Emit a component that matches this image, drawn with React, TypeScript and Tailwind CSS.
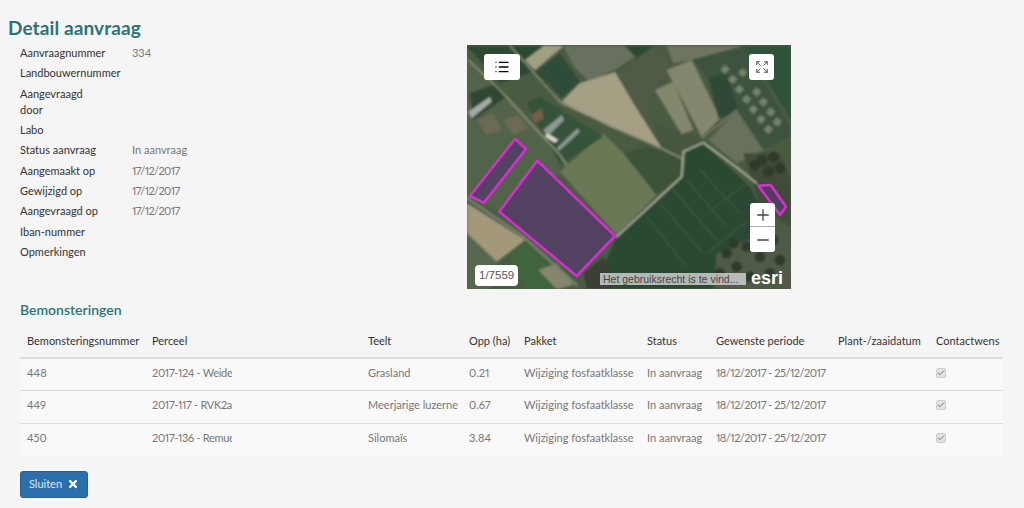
import { FaTimes } from "react-icons/fa";
import { Check, Expand, List, Minus, Plus } from "lucide-react";

const details: [string, string][] = [
  ["Aanvraagnummer", "334"],
  ["Landbouwernummer", ""],
  ["Aangevraagd door", ""],
  ["Labo", ""],
  ["Status aanvraag", "In aanvraag"],
  ["Aangemaakt op", "17/12/2017"],
  ["Gewijzigd op", "17/12/2017"],
  ["Aangevraagd op", "17/12/2017"],
  ["Iban-nummer", ""],
  ["Opmerkingen", ""],
];

const rows = [
  ["448", "2017-124 - Weide", "Grasland", "0.21"],
  ["449", "2017-117 - RVK2a", "Meerjarige luzerne", "0.67"],
  ["450", "2017-136 - Remue", "Silomaïs", "3.84"],
];

const plots = [
  [795, 88], [818, 118], [838, 148], [860, 178], [880, 208], [903, 238], [925, 268],
  [848, 98], [890, 156], [910, 186], [932, 216], [952, 246],
];

const trees = [
  [800, 640], [830, 680], [860, 620], [900, 650], [940, 600], [780, 700], [930, 700], [870, 710], [960, 660], [820, 610],
  [905, 360], [940, 350], [960, 385], [885, 375], [925, 395],
];

const MapPicture = () => (
  <svg viewBox="21 15 972 732" className="absolute inset-0 w-full h-full">
    <defs>
      <filter id="soft">
        <feGaussianBlur stdDeviation="3" />
      </filter>
    </defs>
    <g filter="url(#soft)">
      <rect x="0" y="0" width="1000" height="760" fill="#4a5b43" />
      <polygon points="195,60 250,18 310,18 225,90" fill="#a39f84" />
      <polygon points="310,18 495,18 525,50 470,85 390,125 345,85" fill="#687160" />
      <polygon points="495,18 580,18 530,55" fill="#2c4a32" />
      <polygon points="150,18 250,18 195,60" fill="#2c4a32" />
      <polygon points="235,90 300,40 360,125 305,175" fill="#2f4d37" />
      <polygon points="305,185 360,130 465,97 520,190 605,325 450,260" fill="#a5a084" />
      <polygon points="475,100 590,20 640,90 585,140 560,215 610,325 520,190" fill="#505a47" />
      <polygon points="620,90 695,60 780,235 725,290" fill="#83876d" />
      <polygon points="585,150 640,125 700,270 665,282" fill="#84876c" />
      <polygon points="575,240 665,282 725,290 725,305 665,350 610,325" fill="#475640" />
      <polygon points="700,60 790,18 850,18 990,260 990,290 910,330" fill="#3e5340" />
      <polygon points="745,115 800,100 835,215 775,235" fill="#2e4a35" />
      <polygon points="850,18 993,18 993,240 920,120" fill="#2d5238" />
      <polygon points="620,18 850,18 690,60 640,70" fill="#6f7562" />
      <polygon points="745,300 830,210 910,330 830,370" fill="#69705b" />
      <polygon points="300,395 430,280 490,340 590,465 470,585" fill="#6a7856" />
      <polygon points="490,340 560,320 665,355 665,410 590,465" fill="#3e5338" />
      <polygon points="470,590 670,410 680,330 730,310 870,440 900,500 870,747 400,747" fill="#2b4a31" />
      <g stroke="#3a5a3e" strokeWidth="4" fill="none">
        <path d="M680 420 L800 560 M640 450 L770 600 M600 490 L730 640 M560 530 L680 680 M720 390 L840 520" />
        <path d="M760 505 L860 430 M740 640 L860 545" />
      </g>
      <polygon points="21,490 195,600 110,665 21,580" fill="#a4987a" />
      <polygon points="21,580 110,665 90,747 21,747" fill="#56684f" />
      <polygon points="145,640 195,605 260,670 300,747 200,747" fill="#3f653e" />
      <polygon points="235,690 290,670 340,735 290,747" fill="#86866c" />
      <polygon points="21,60 120,150 300,345 300,400 118,515 21,470" fill="#51634a" />
      <polygon points="21,18 150,18 305,190 235,90 120,130" fill="#2e4a33" />
      <polygon points="30,160 110,130 140,170 40,240" fill="#2d4733" />
      <polygon points="50,240 100,220 125,270 80,285" fill="#6c6a55" />
      <polygon points="130,240 175,225 205,265 160,285" fill="#6c6a55" />
      <polygon points="200,190 240,170 430,290 300,375" fill="#35533a" />
      <polygon points="770,640 860,600 993,560 993,747 760,747" fill="#4f5a48" />
      <polygon points="850,340 960,340 993,420 993,560 900,500" fill="#404b38" />
      <polygon points="370,700 430,650 470,747 380,747" fill="#3b4034" />
      {plots.map(([x, y]) => (
        <rect key={`${x}-${y}`} x={x - 10} y={y - 10} width="20" height="20" fill="#75836c" transform={`rotate(40 ${x} ${y})`} />
      ))}
      {trees.map(([x, y]) => (
        <circle key={`${x}-${y}`} cx={x} cy={y} r="16" fill="#2e3a2a" />
      ))}
      <g fill="none" strokeLinecap="round">
        <path d="M150 18 L305 190 L605 325 L665 355" stroke="#8f9379" strokeWidth="4" />
        <path d="M25 60 L120 150 L300 345 L320 375" stroke="#8e9179" strokeWidth="5" />
        <path d="M21 475 L190 590 L350 735" stroke="#7c8272" strokeWidth="7" />
        <path d="M470 590 L665 410 L670 335 L730 308 L840 390 L890 430" stroke="#bfc4b0" strokeWidth="4" />
        <path d="M725 295 L830 210" stroke="#92957b" strokeWidth="3" />
      </g>
      <polygon points="250,270 305,225 312,240 262,290" fill="#8b9a93" />
      <polygon points="290,325 352,265 360,275 298,332" fill="#8a9790" />
      <polygon points="262,280 295,300 285,308 255,290" fill="#d8d8cc" />
      <polygon points="215,225 245,205 250,235 225,250" fill="#7a5a4a" />
      <polygon points="25,215 90,170 95,185 35,235" fill="#a6aaa6" />
    </g>
    <g stroke="#d22fce" strokeWidth="8" strokeLinejoin="round" fill="#533c66" fillOpacity="0.85">
      <polygon points="165,297 198,327 72,488 30,468" />
      <polygon points="232,362 465,588 350,708 118,515" />
      <polygon points="895,437 932,435 978,500 960,525" />
    </g>
  </svg>
);

export default function App() {
  return (
    <div className="relative h-[508px] w-[1024px] overflow-hidden bg-[#f5f5f5] pl-[8px] pt-[15px] font-['Lato',sans-serif] text-[11px] text-[#333] proportional-nums">
      <h1 className="h-[25px] text-[19px] font-bold leading-[25px] tracking-[0.1px] text-[#2b7478]">Detail aanvraag</h1>

      <div className="mt-[5px] flex h-[244px]">
        <dl className="ml-[12px] w-[447px] -mt-[2px]">
          {details.map(([label, value]) => (
            <div key={label} className="grid grid-cols-[112px_1fr] py-[2px] leading-[16.3px]">
              <dt className="w-[80px]">{label}</dt>
              <dd className={value.includes("/") ? "tracking-[-0.6px] text-[#777]" : "text-[#777]"}>{value}</dd>
            </div>
          ))}
        </dl>

        <div className="relative h-[244px] w-[324px] overflow-hidden">
          <MapPicture />
          <button className="absolute left-[17px] top-[9px] flex h-[26px] w-[36px] items-center justify-center rounded-[3px] bg-white text-black">
            <List size={16} strokeWidth={2} />
          </button>
          <button className="absolute right-[17px] top-[9px] flex h-[26px] w-[25px] items-center justify-center rounded-[3px] bg-white text-[#444]">
            <Expand size={14} strokeWidth={1.5} />
          </button>
          <div className="absolute left-[283px] top-[158px] flex w-[25px] flex-col rounded-[3px] bg-white text-[#444]">
            <div className="flex h-[24px] items-center justify-center border-b border-[#aaa]">
              <Plus size={18} strokeWidth={1.75} />
            </div>
            <div className="flex h-[25px] items-center justify-center">
              <Minus size={18} strokeWidth={1.75} />
            </div>
          </div>
          <div className="absolute bottom-[3px] left-[8px] rounded-[4px] bg-white px-[4px] py-[3px] font-['Liberation_Sans',sans-serif] text-[11.5px] leading-[15px] text-[#555]">
            1/7559
          </div>
          <div className="absolute bottom-[4px] left-[133px] h-[12px] w-[146px] whitespace-nowrap bg-[#ccc]/85 px-[3px] font-['Liberation_Sans',sans-serif] text-[10.5px] leading-[12px] text-[#444]">
            Het gebruiksrecht is te vind...
          </div>
          <div className="absolute bottom-[1px] right-[8px] font-['Liberation_Sans',sans-serif] text-[18px] font-bold leading-[20px] text-white">
            esri
          </div>
        </div>
      </div>

      <div className="ml-[12px] mr-[13px]">
        <h2 className="mt-[11px] h-[20px] text-[14px] font-semibold leading-[20px] text-[#2b7478]">Bemonsteringen</h2>

        <table className="mt-[5px] w-[983px] table-fixed border-collapse text-left">
          <colgroup>
            <col className="w-[125px]" />
            <col className="w-[216px]" />
            <col className="w-[101px]" />
            <col className="w-[55px]" />
            <col className="w-[123px]" />
            <col className="w-[69px]" />
            <col className="w-[122px]" />
            <col className="w-[98px]" />
            <col className="w-[74px]" />
          </colgroup>
          <thead>
            <tr className="h-[33px] border-b-2 border-[#ddd]">
              {["Bemonsteringsnummer", "Perceel", "Teelt", "Opp (ha)", "Pakket", "Status", "Gewenste periode", "Plant-/zaaidatum", "Contactwens"].map((h) => (
                <th key={h} className="whitespace-nowrap px-[7px] font-normal">
                  {h}
                </th>
              ))}
            </tr>
          </thead>
          <tbody className="text-[#777]">
            {rows.map((r) => (
              <tr key={r[0]} className="h-[32.5px] border-b border-[#ddd] bg-[#f9f9f9] last:border-b-0">
                <td className="px-[7px] pb-[3px]">{r[0]}</td>
                <td className="px-[7px] pb-[3px]">
                  <div className="w-[80px] overflow-hidden whitespace-nowrap tracking-[-0.3px]">{r[1]}</div>
                </td>
                <td className="whitespace-nowrap px-[7px] pb-[3px]">{r[2]}</td>
                <td className="px-[7px] pb-[3px]">{r[3]}</td>
                <td className="whitespace-nowrap px-[7px] pb-[3px]">Wijziging fosfaatklasse</td>
                <td className="whitespace-nowrap px-[7px] pb-[3px]">In aanvraag</td>
                <td className="whitespace-nowrap px-[7px] pb-[3px] tracking-[-0.5px]">18/12/2017 - 25/12/2017</td>
                <td className="px-[7px]"></td>
                <td className="px-[7px] pb-[3px]">
                  <div className="flex h-[10px] w-[10px] items-center justify-center rounded-[2px] border border-[#ccc] bg-[#e2e2e2] text-[#777]">
                    <Check size={8} strokeWidth={3} />
                  </div>
                </td>
              </tr>
            ))}
          </tbody>
        </table>

        <button className="mt-[15px] flex h-[27px] w-[68px] items-center justify-center gap-[5px] rounded-[3px] border border-[#255f96] bg-[#2c6fad] text-[#dfe9f3]">
          Sluiten <FaTimes size={12} className="text-white" />
        </button>
      </div>
    </div>
  );
}
